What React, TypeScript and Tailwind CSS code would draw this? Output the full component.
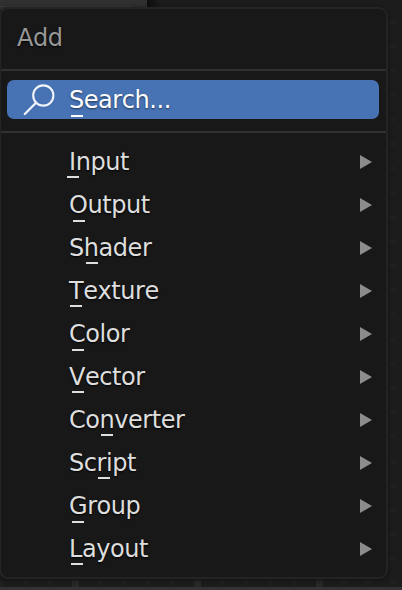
type Entry = {
	label: string
	// Position of the accelerator mark below the label
	mark: string
}

const entries: Entry[] = [
	{ label: 'Input', mark: 'left-[-2px] top-[35px]' },
	{ label: 'Output', mark: 'left-[4px] top-[36px]' },
	{ label: 'Shader', mark: 'left-[17px] top-[35px]' },
	{ label: 'Texture', mark: 'left-[1px] top-[35px]' },
	{ label: 'Color', mark: 'left-[3px] top-[36px]' },
	{ label: 'Vector', mark: 'left-[3px] top-[35px]' },
	{ label: 'Converter', mark: 'left-[32px] top-[35px]' },
	{ label: 'Script', mark: 'left-[29px] top-[35px]' },
	{ label: 'Group', mark: 'left-[3px] top-[36px]' },
	{ label: 'Layout', mark: 'left-[2px] top-[35px]' },
]

function SearchIcon() {
	return (
		<svg className="h-8 w-8 shrink-0" viewBox="0 0 32 32" fill="none" stroke="#f0f4fa" strokeWidth={2.1}>
			<circle cx={20.3} cy={11.5} r={10.1} />
			<path d="M13 18.8L1.8 30" strokeWidth={2.3} strokeLinecap="round" />
		</svg>
	)
}

function Backdrop() {
	return (
		<svg className="absolute inset-0 h-full w-full" viewBox="0 0 402 590">
			<defs>
				<pattern id="dots" x={-0.5} y={19.7} width={24.4} height={24.4} patternUnits="userSpaceOnUse">
					<rect width={4.6} height={4.6} fill="#202020" />
				</pattern>
				<linearGradient id="shade" x1="0" x2="1" y1="0" y2="0">
					<stop offset="0" stopColor="#0e0e0e" />
					<stop offset="1" stopColor="#1c1c1c" />
				</linearGradient>
			</defs>
			<rect width={402} height={590} fill="#1c1c1c" />
			<rect y={10} width={402} height={577} fill="url(#dots)" />
			<rect width={147} height={10} fill="#303030" />
			<rect y={6} width={132} height={1} fill="#3d3d3d" />
			<rect x={147} width={14} height={8} fill="url(#shade)" />
			{[72, 194, 316].map((x) => (
				<rect key={x} x={x} y={580} width={7} height={7} fill="#282828" />
			))}
			<rect y={587} width={402} height={3} fill="#333333" />
		</svg>
	)
}

export default function App() {
	return (
		<div className="relative h-[590px] w-[402px] overflow-hidden pt-[7px] font-['DejaVu_Sans',sans-serif] text-[24px] tracking-[-0.45px] [font-kerning:none]">
			<Backdrop />
			<div className="relative -ml-px h-[572px] w-[389px] rounded-[9px] border-2 border-[#242424] bg-[#181818] shadow-[0_1px_4px_#111]">
				<div className="flex h-[60px] items-center pb-0.5 pl-4 text-[#989898] [text-shadow:0_1px_2px_#000]">Add</div>
				<div className="h-0.5 bg-[#303030]" />
				<div className="h-[60px] px-1.5 pt-[9px]">
					<div className="flex h-[39px] w-[372px] items-center rounded-[7px] bg-[#4772b3] pl-4 text-white">
						<SearchIcon />
						<span className="relative ml-[14px] mt-0.5 leading-[39px] [text-shadow:0_1px_2px_#0008]">
							Search...
							<span className="absolute left-[2px] top-[34px] h-0.5 w-[12px] bg-white" />
						</span>
					</div>
				</div>
				<div className="h-0.5 bg-[#303030]" />
				<ul className="pt-[7px]">
					{entries.map((entry) => (
						<li key={entry.label} className="flex h-[43px] items-center justify-between pl-[68px] pr-[14px] text-[#dedede]">
							<span className="relative mt-0.5 leading-[43px] [text-shadow:0_1px_2px_#000]">
								{entry.label}
								<span className={`absolute h-0.5 w-[12px] bg-[#dedede] ${entry.mark}`} />
							</span>
							<svg className="h-3.5 w-[13px]" viewBox="0 0 13 14">
								<path d="M1 0L13 7L1 14Z" fill="#8c8c8c" />
							</svg>
						</li>
					))}
				</ul>
			</div>
		</div>
	)
}
